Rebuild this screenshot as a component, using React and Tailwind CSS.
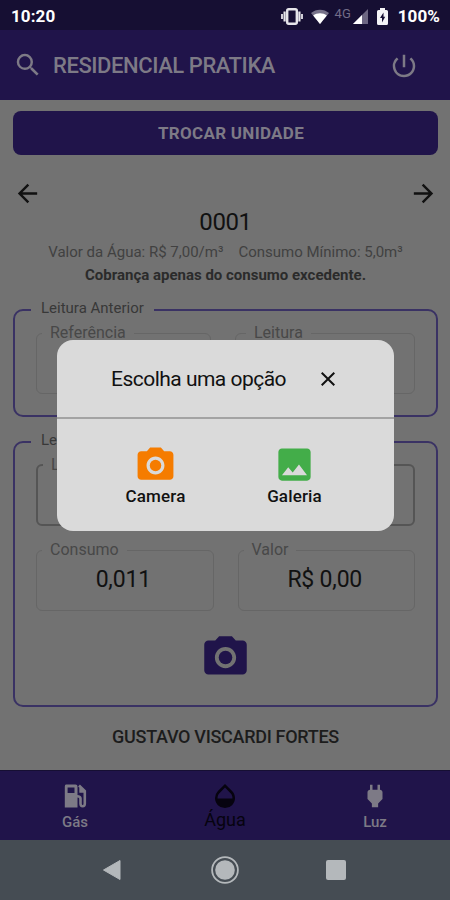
import {
  MdArrowBack,
  MdArrowForward,
  MdClose,
  MdOpacity,
  MdPhoto,
  MdPhotoCamera,
  MdPower,
  MdPowerSettingsNew,
  MdSearch,
} from "react-icons/md";

export default function App() {
  return (
    <div className="relative flex h-[900px] w-[450px] flex-col overflow-hidden bg-[#727272] font-['Roboto','Liberation_Sans',sans-serif] text-[#111]">
      <StatusBar></StatusBar>
      <Header></Header>
      <Reading></Reading>
      <TabBar></TabBar>
      <SystemNav></SystemNav>
      <PickerModal></PickerModal>
    </div>
  );
}

function StatusBar() {
  return (
    <div className="flex h-[30px] shrink-0 items-center justify-between bg-[#160f33] pr-2.5 pl-[11px] pt-[3px] text-white">
      <span className="text-[17px] font-bold leading-none tracking-[0.1px]">10:20</span>
      <div className="flex items-center">
        <svg viewBox="0 0 22 17" className="mr-2 h-[17px] w-[22px]">
          <rect x="6.2" y="1.2" width="9.6" height="14.6" rx="1.5" fill="none" stroke="#e6e5ea" strokeWidth="2.4" />
          <path d="M3.6 3.5V13.5M18.4 3.5V13.5" stroke="#e6e5ea" strokeWidth="2.2" />
          <path d="M1 6V11M21 6V11" stroke="#e6e5ea" strokeWidth="1.8" />
        </svg>
        <svg viewBox="0 0 18 15" className="mr-[6px] h-[15px] w-[18px]">
          <path d="M9 15L0 4C5 -0.5 13 -0.5 18 4z" fill="#77728a" />
          <path d="M9 15L2.2 6.4C6 3.6 12 3.6 15.8 6.4z" fill="#fff" />
        </svg>
        <span className="-mt-1.5 mr-0.5 text-[13px] leading-none text-[#736d88]">4G</span>
        <svg viewBox="0 0 15 15" className="mr-[9px] h-[15px] w-[15px]">
          <path d="M15 0V15H0z" fill="#6d6782" />
          <path d="M9 6V15H0z" fill="#fff" />
        </svg>
        <svg viewBox="0 0 11 17" className="mr-[10px] h-[17px] w-[11px]">
          <path d="M3 0H8V2H9.5Q11 2 11 3.5V15.5Q11 17 9.5 17H1.5Q0 17 0 15.5V3.5Q0 2 1.5 2H3z" fill="#f4f4f6" />
          <path d="M6.5 4.5L3 10H5V14.5L8.2 8.8H6.5z" fill="#160f33" />
        </svg>
        <span className="text-[17px] font-bold leading-none tracking-[0.1px]">100%</span>
      </div>
    </div>
  );
}

function Header() {
  return (
    <div className="flex h-[70px] shrink-0 items-center bg-[#20144a] pr-[31px] pl-[13px] text-[#7d7a86]">
      <MdSearch className="h-[30px] w-[30px]"></MdSearch>
      <span className="ml-[10px] mt-0.5 flex-1 text-[22px] font-medium leading-none tracking-[-0.43px]">
        RESIDENCIAL PRATIKA
      </span>
      <MdPowerSettingsNew className="mt-px h-[30px] w-[30px]"></MdPowerSettingsNew>
    </div>
  );
}

function Reading() {
  return (
    <div className="flex flex-1 flex-col pt-[11px] pr-[12px] pl-[13px]">
      <button className="h-[44px] shrink-0 rounded-lg bg-[#20144a] pl-[11px] text-[17px] font-bold leading-none tracking-[0.3px] text-[#7d7a86]">
        TROCAR UNIDADE
      </button>

      <div className="mt-[24px] flex justify-between">
        <MdArrowBack className="h-[29px] w-[29px]"></MdArrowBack>
        <MdArrowForward className="h-[29px] w-[29px]"></MdArrowForward>
      </div>

      <div className="flex flex-col items-center">
        <span className="mt-[2px] text-2xl leading-[24px] tracking-[-0.4px]">0001</span>
        <div className="mt-[9px] flex gap-[15px] text-[15px] leading-[18px] text-[#414141]">
          <span>Valor da Água: R$ 7,00/m³</span>
          <span>Consumo Mínimo: 5,0m³</span>
        </div>
        <span className="mt-[5px] text-[15px] font-bold leading-[18px] text-[#2b2b2b]">
          Cobrança apenas do consumo excedente.
        </span>
      </div>

      <Group title="Leitura Anterior" className="mt-[15px] h-[118px] pt-[3px]">
        <div className="flex gap-6">
          <Field label="Referência" className="flex-1"></Field>
          <Field label="Leitura" className="flex-1 pl-[10px]"></Field>
        </div>
      </Group>

      <Group title="Leitura Atual" className="mt-[14px] h-[276px] pt-[3px]">
        <Field label="Leitura" active></Field>
        <div className="mt-[15px] flex gap-6">
          <Field label="Consumo" className="flex-1" value="0,011"></Field>
          <Field label="Valor" className="flex-1" value="R$ 0,00"></Field>
        </div>
        <MdPhotoCamera className="mx-auto mt-[21px] h-[51px] w-[51px] fill-[#20144a]"></MdPhotoCamera>
      </Group>

      <span className="mt-[20px] text-center text-lg font-medium leading-5 tracking-[-0.3px] text-[#1c1c1c]">
        GUSTAVO VISCARDI FORTES
      </span>
    </div>
  );
}

function Group({ title, className, children }) {
  return (
    <fieldset className={`min-w-0 shrink-0 rounded-[10px] border-2 border-[#3a3264] px-[21px] ${className}`}>
      <legend className="-ml-[5px] h-[22px] px-[10px] text-[15px] leading-[19px] text-[#383838]">
        {title}
      </legend>
      {children}
    </fieldset>
  );
}

function Field({ label, value, active, className }) {
  return (
    <fieldset
      className={`h-[70px] min-w-0 rounded-md px-[5px] ${active ? "border-2 border-[#555]" : "border border-[#666]"} ${className || ""}`}
    >
      <legend className="h-[18px] px-2 text-base leading-[18px] text-[#484848]">{label}</legend>
      <div className="pt-[9px] pr-[3px] text-center text-[23px] leading-[24px] tracking-[-0.2px]">{value}</div>
    </fieldset>
  );
}

function TabBar() {
  return (
    <div className="grid h-[70px] shrink-0 grid-cols-3 border-t border-[#160f33] bg-[#20144a] text-[#7d7a86]">
      <Tab icon={GasPump} label="Gás"></Tab>
      <Tab icon={MdOpacity} label="Água" active></Tab>
      <Tab icon={MdPower} label="Luz"></Tab>
    </div>
  );
}

function Tab({ icon: Icon, label, active }) {
  return (
    <div className={`flex flex-col items-center pt-[10px] ${active ? "text-[#06030f]" : ""}`}>
      <Icon className="h-[30px] w-[30px]"></Icon>
      <span
        className={
          active ? "text-lg leading-[18px]" : "mt-0.5 text-[15px] font-medium leading-[19px]"
        }
      >
        {label}
      </span>
    </div>
  );
}

function GasPump({ className }) {
  return (
    <svg viewBox="0 0 30 30" className={className} fill="currentColor">
      <path
        fillRule="evenodd"
        d="M6 3.5H15.5Q17.5 3.5 17.5 5.5V26.5H4.8V5.5Q4.8 3.5 6 3.5zM7.6 6.5V12H14.5V6.5z"
      />
      <path
        d="M19 4.5L24.8 10V22.5Q24.8 25.3 22.7 25.3Q20.5 25.3 20.5 22.5V17.5Q20.5 15.3 17 15.3M20.6 6V10.5H24"
        fill="none"
        stroke="currentColor"
        strokeWidth="2.6"
      />
    </svg>
  );
}

function SystemNav() {
  return (
    <div className="flex h-[60px] shrink-0 items-center justify-center gap-[89px] bg-[#454c53] pr-0.5">
      <svg viewBox="0 0 20 22" className="h-[22px] w-[20px]">
        <path d="M18 1.5V20.5L1.5 11z" fill="#b4b8bb" stroke="#b4b8bb" strokeLinejoin="round" />
      </svg>
      <svg viewBox="0 0 28 28" className="h-7 w-7">
        <circle cx="14" cy="14" r="12.9" fill="none" stroke="#b4b8bb" strokeWidth="1.8" />
        <circle cx="14" cy="14" r="9.8" fill="#b4b8bb" />
      </svg>
      <div className="-ml-[2px] h-5 w-5 rounded-xs bg-[#b4b8bb]"></div>
    </div>
  );
}

function PickerModal() {
  return (
    <div className="absolute top-[340px] left-[57px] flex h-[191px] w-[337px] flex-col rounded-2xl bg-[#dadada]">
      <div className="flex h-[79px] items-center border-b-2 border-[#a3a3a3] pl-[54px]">
        <span className="w-[175px] text-[21px] leading-6 tracking-[-0.52px] whitespace-nowrap">
          Escolha uma opção
        </span>
        <MdClose className="ml-[30px] h-6 w-6"></MdClose>
      </div>
      <div className="flex justify-center gap-[76px] pt-[30px] pr-px text-[17px] font-medium leading-5 tracking-[0.15px]">
        <div className="flex w-[63px] flex-col items-center">
          <MdPhotoCamera className="-mt-[5px] h-[43px] w-[43px] fill-[#f57c00]"></MdPhotoCamera>
          <span className="-mt-px">Camera</span>
        </div>
        <div className="flex w-[63px] flex-col items-center">
          <MdPhoto className="-mt-[6px] h-[43px] w-[43px] fill-[#43ad49]"></MdPhoto>
          <span>Galeria</span>
        </div>
      </div>
    </div>
  );
}
